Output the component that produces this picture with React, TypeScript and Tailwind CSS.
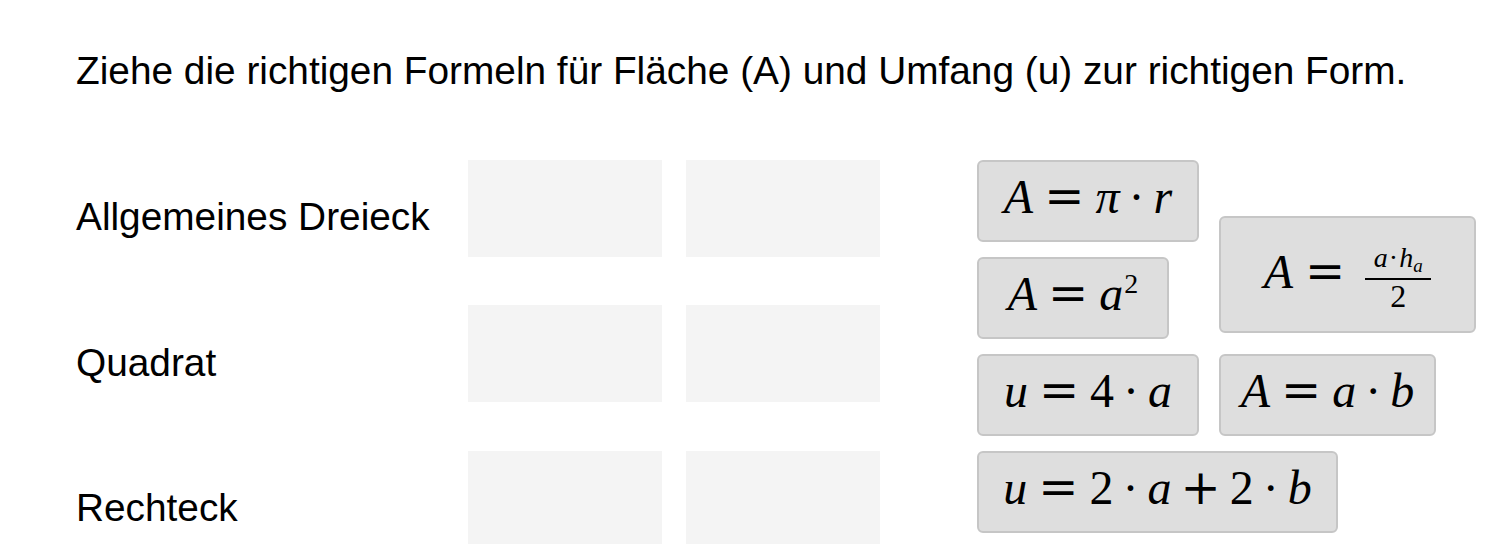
import React from 'react';

// small helpers for the formula cards
function V({ children, className = '' }: { children: React.ReactNode; className?: string }) {
    return <span className={`italic ${className}`}>{children}</span>;
}

function Eq({ children = '=' }: { children?: React.ReactNode }) {
    return <span className="font-['DejaVu_Serif',serif] not-italic mx-[11px]">{children}</span>;
}

function Dot() {
    return <span className="not-italic mx-[9px]">·</span>;
}

function N({ children }: { children: React.ReactNode }) {
    return <span className="not-italic">{children}</span>;
}

function Card({ width, children }: { width: string; children: React.ReactNode }) {
    return (
        <div className={`${width} h-[82px] shrink-0 rounded-[6px] border-2 border-[#c6c6c6] bg-[#dedede] flex justify-center pt-[10px]`}>
            <div className="flex items-baseline leading-none text-[48px] font-['Liberation_Serif','Times_New_Roman',serif] text-black">
                {children}
            </div>
        </div>
    );
}

const rows = ['Allgemeines Dreieck', 'Quadrat', 'Rechteck'];

export default function App() {
    return (
        <div className="min-h-screen bg-white text-black font-['Liberation_Sans',Arial,sans-serif]">
            <h1 className="pl-[76px] pt-[52px] text-[38.8px] leading-none font-normal">
                Ziehe die richtigen Formeln für Fläche (A) und Umfang (u) zur richtigen Form.
            </h1>

            <div className="flex pl-[76px] mt-[69.2px]">
                {/* shapes with drop zones */}
                <div className="flex flex-col gap-[48.5px]">
                    {rows.map(label => (
                        <div key={label} className="flex">
                            <div className="w-[392px] pt-[38.3px] text-[38.8px] leading-none">{label}</div>
                            <div className="flex gap-[24px]">
                                <div className="w-[194px] h-[97px] bg-[#f4f4f4]" />
                                <div className="w-[194px] h-[97px] bg-[#f4f4f4]" />
                            </div>
                        </div>
                    ))}
                </div>

                {/* formula pool */}
                <div className="ml-[97px] mt-[0.5px] flex flex-col gap-[15px]">
                    <div className="flex gap-[20px] items-start">
                        <div className="flex flex-col gap-[15px]">
                            <Card width="w-[222px]">
                                <V>A</V>
                                <Eq />
                                <V>π</V>
                                <Dot />
                                <V>r</V>
                            </Card>
                            <Card width="w-[192px]">
                                <V>A</V>
                                <Eq />
                                <V>a</V>
                                <span className="not-italic text-[28px] relative -top-[17px] ml-[1px]">2</span>
                            </Card>
                        </div>
                        <div className="w-[257px] h-[117px] mt-[56px] rounded-[6px] border-2 border-[#c6c6c6] bg-[#dedede] flex justify-center items-start pt-[26px] font-['Liberation_Serif','Times_New_Roman',serif]">
                            <div className="flex items-baseline leading-none text-[48px] mt-[3px]">
                                <V>A</V>
                                <span className="font-['DejaVu_Serif',serif] mx-[12px]">=</span>
                            </div>
                            <div className="flex flex-col items-center w-[66px] ml-[8px]">
                                <div className="flex items-baseline leading-none text-[28px] h-[28px] mb-[5.5px]">
                                    <V>a</V>
                                    <span className="mx-[1px]">·</span>
                                    <V>h</V>
                                    <V className="text-[19px] relative top-[5px]">a</V>
                                </div>
                                <div className="w-[66px] h-[2px] bg-black" />
                                <div className="text-[32px] leading-none">2</div>
                            </div>
                        </div>
                    </div>

                    <div className="flex gap-[20px]">
                        <Card width="w-[222px]">
                            <V>u</V>
                            <Eq />
                            <N>4</N>
                            <Dot />
                            <V>a</V>
                        </Card>
                        <Card width="w-[217px]">
                            <V>A</V>
                            <Eq />
                            <V>a</V>
                            <Dot />
                            <V>b</V>
                        </Card>
                    </div>

                    <div className="flex">
                        <Card width="w-[361px]">
                            <V>u</V>
                            <Eq />
                            <N>2</N>
                            <Dot />
                            <V>a</V>
                            <span className="font-['DejaVu_Serif',serif] mx-[9px]">+</span>
                            <N>2</N>
                            <Dot />
                            <V>b</V>
                        </Card>
                    </div>
                </div>
            </div>
        </div>
    );
}
